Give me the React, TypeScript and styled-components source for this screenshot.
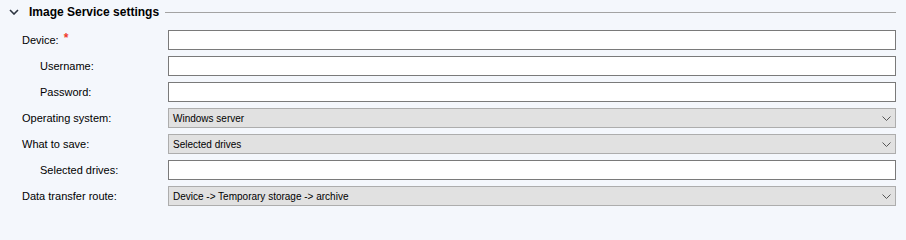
import React from "react";
import styled, { createGlobalStyle } from "styled-components";

const Global = createGlobalStyle`
  html, body { margin: 0; padding: 0; background: #f4f7fc; }
  body { font-family: "Liberation Sans", Arial, sans-serif; }
`;

const Panel = styled.div`
  width: 906px;
  height: 214px;
  box-sizing: border-box;
  background: #f4f7fc;
  padding: 4px 10px 0 0;
  color: #000;
`;

const Header = styled.div`
  display: flex;
  align-items: center;
  height: 16px;
  padding-left: 9px;
  margin-bottom: 10px;
`;

const Chevron = styled.svg`
  width: 10px;
  height: 6px;
  flex: none;
  margin-right: 10px;
`;

const Title = styled.span`
  font-size: 12px;
  font-weight: bold;
  white-space: nowrap;
`;

const Rule = styled.div`
  flex: 1;
  height: 1px;
  background: #a3a3a3;
  margin-left: 6px;
`;

const Form = styled.div`
  display: grid;
  grid-template-columns: 146px 1fr;
  row-gap: 6px;
  padding-left: 22px;
`;

const Label = styled.label<{ $indent?: boolean }>`
  display: flex;
  align-items: center;
  height: 20px;
  font-size: 11px;
  padding-left: ${(p) => (p.$indent ? "18px" : "0")};
  white-space: nowrap;
`;

const Required = styled.span`
  color: #f03a2a;
  margin-left: 5px;
  font-size: 12px;
  font-weight: bold;
  position: relative;
  top: -2px;
`;

const TextBox = styled.div`
  height: 20px;
  box-sizing: border-box;
  border: 1px solid #7a7a7a;
  background: #ffffff;
`;

const Select = styled.div`
  height: 20px;
  box-sizing: border-box;
  border: 1px solid #adadad;
  background: #e1e1e1;
  display: flex;
  align-items: center;
  justify-content: space-between;
  padding: 0 4px 0 4px;
  font-size: 10px;
  white-space: nowrap;
`;

const SelectArrow = styled.svg`
  width: 9px;
  height: 5px;
  flex: none;
`;

const Arrow = () => (
  <SelectArrow viewBox="0 0 9 5">
    <path d="M0.5 0.5 L4.5 4.5 L8.5 0.5" fill="none" stroke="#555" strokeWidth="1" />
  </SelectArrow>
);

type Row =
  | { label: string; kind: "text"; indent?: boolean; required?: boolean }
  | { label: string; kind: "select"; value: string; indent?: boolean };

const rows: Row[] = [
  { label: "Device:", kind: "text", required: true },
  { label: "Username:", kind: "text", indent: true },
  { label: "Password:", kind: "text", indent: true },
  { label: "Operating system:", kind: "select", value: "Windows server" },
  { label: "What to save:", kind: "select", value: "Selected drives" },
  { label: "Selected drives:", kind: "text", indent: true },
  { label: "Data transfer route:", kind: "select", value: "Device -> Temporary storage -> archive" },
];

export default function App() {
  return (
    <>
      <Global />
      <Panel>
        <Header>
          <Chevron viewBox="0 0 10 6">
            <path d="M1 1 L5 5 L9 1" fill="none" stroke="#2d3440" strokeWidth="1.6" />
          </Chevron>
          <Title>Image Service settings</Title>
          <Rule />
        </Header>
        <Form>
          {rows.map((r) => (
            <React.Fragment key={r.label}>
              <Label $indent={r.indent}>
                {r.label}
                {r.kind === "text" && r.required && <Required>*</Required>}
              </Label>
              {r.kind === "text" ? (
                <TextBox />
              ) : (
                <Select>
                  <span>{r.value}</span>
                  <Arrow />
                </Select>
              )}
            </React.Fragment>
          ))}
        </Form>
      </Panel>
    </>
  );
}
